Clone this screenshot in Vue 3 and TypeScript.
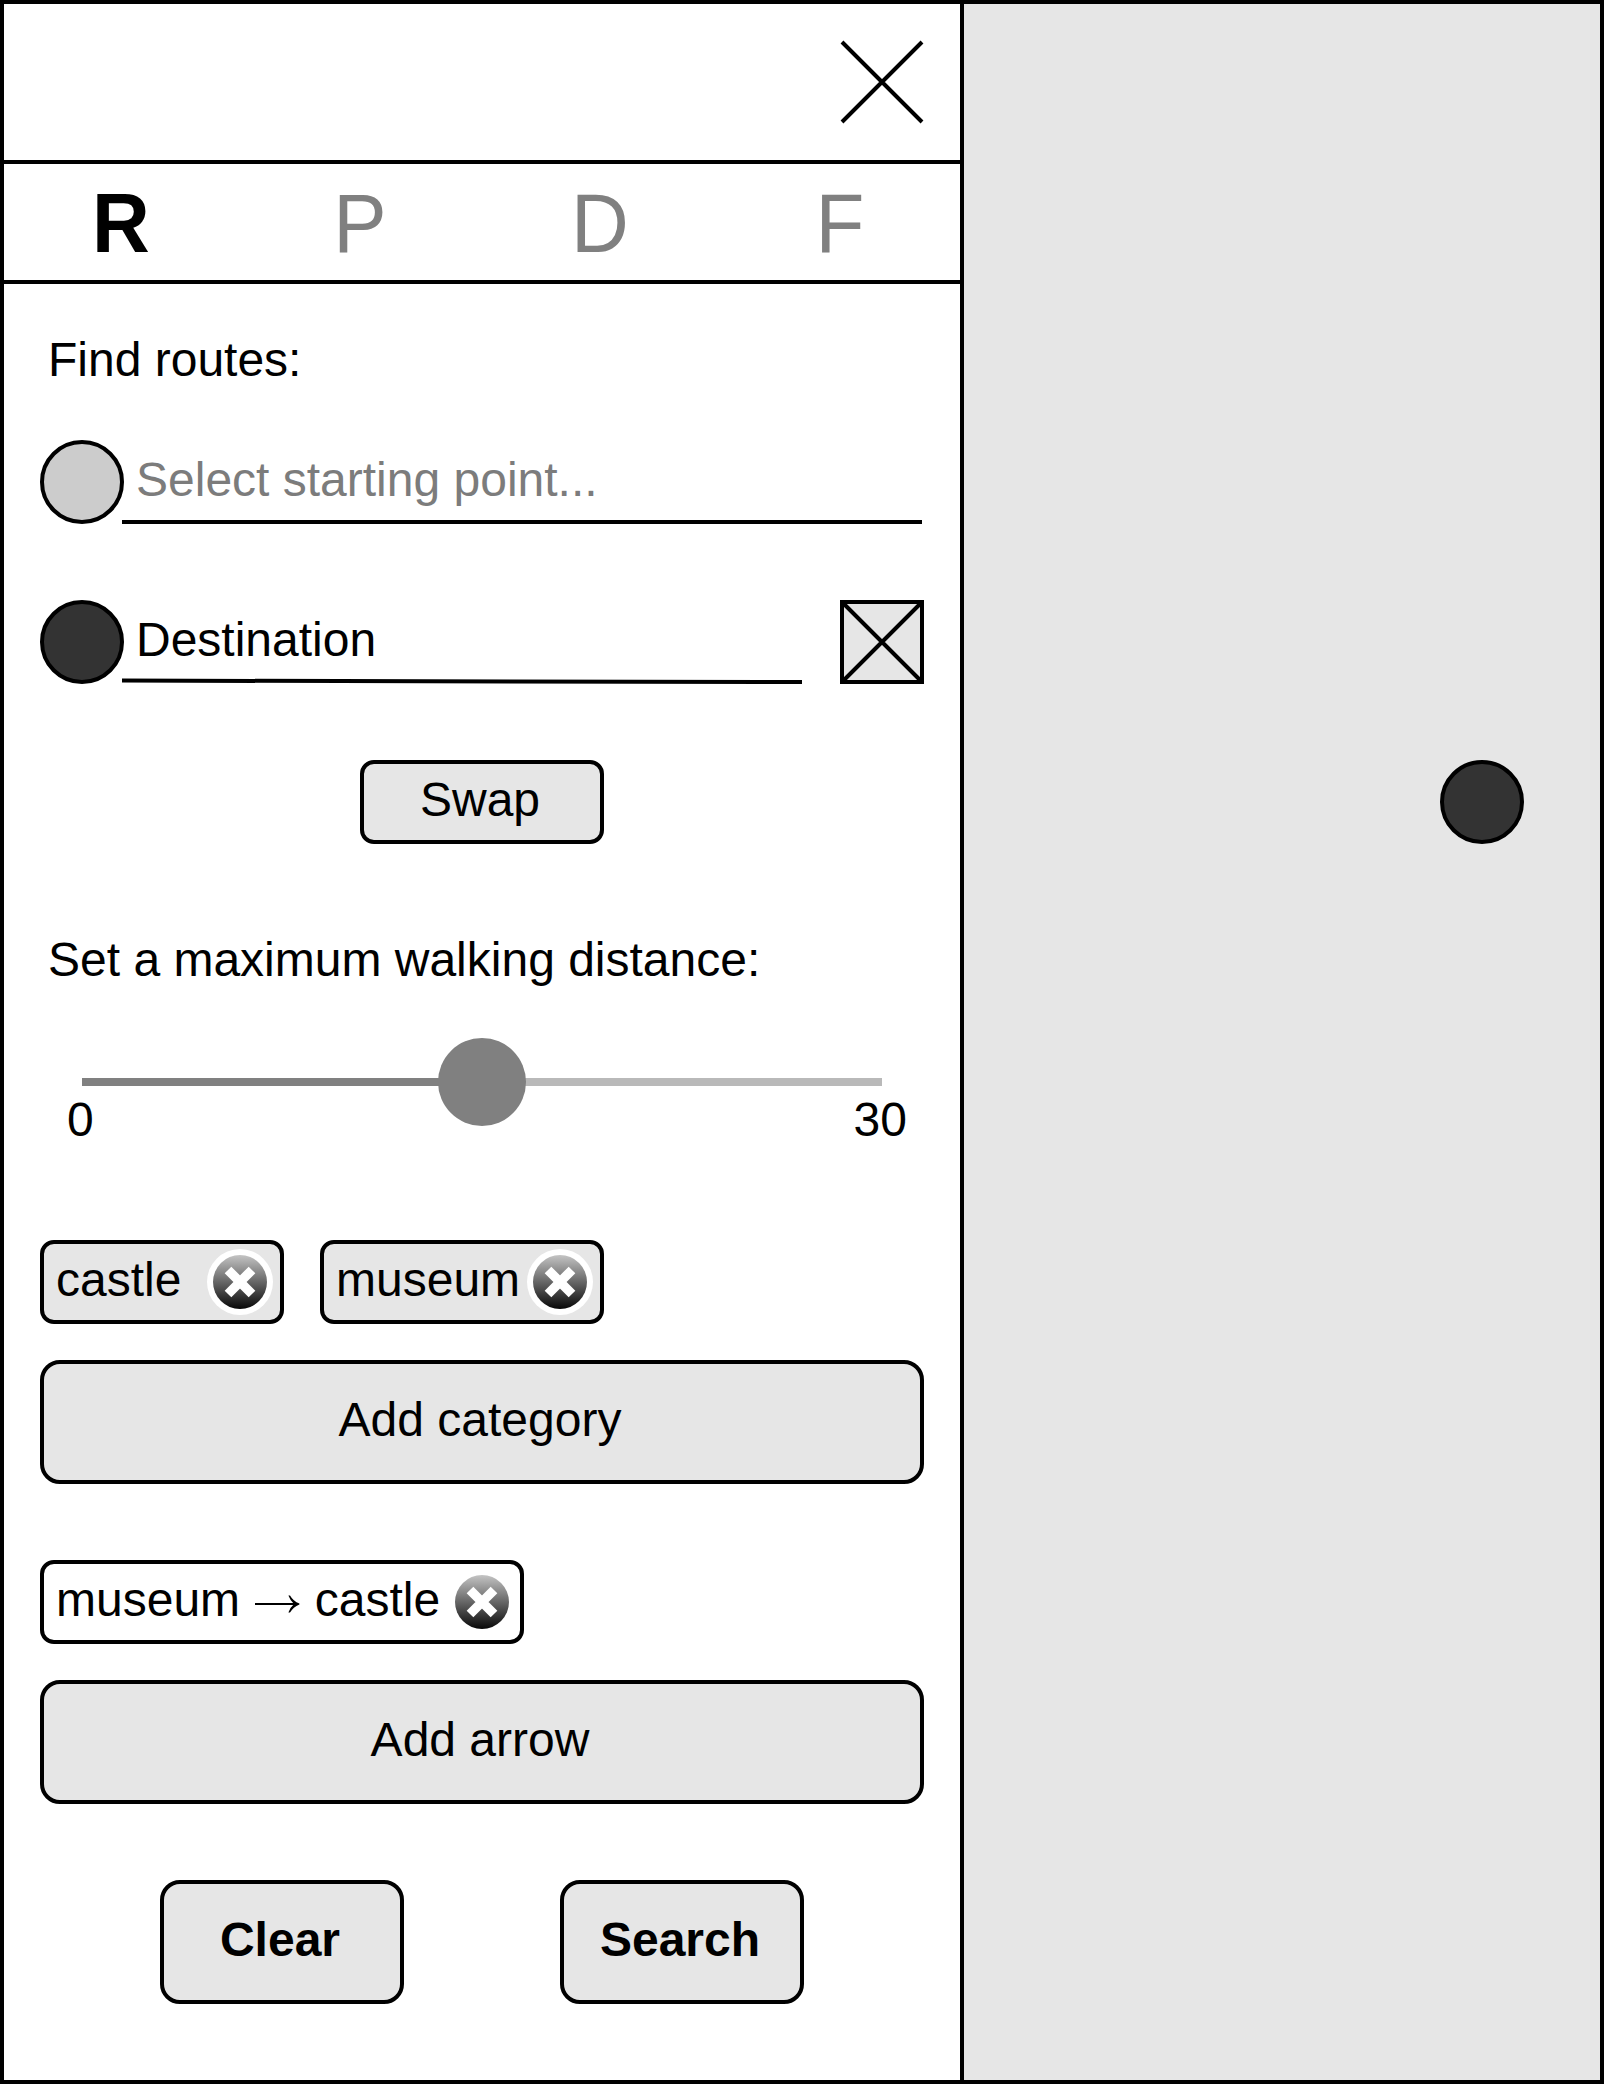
<script setup lang="ts">
import { ref } from 'vue'

interface Tab {
  id: string
  active: boolean
}

const tabs = ref<Tab[]>([
  { id: 'R', active: true },
  { id: 'P', active: false },
  { id: 'D', active: false },
  { id: 'F', active: false },
])

const categories = ref<string[]>(['castle', 'museum'])
const maxDistance = 30
const distance = ref(15)
</script>

<template>
  <div class="screen">
    <aside class="panel">
      <header class="top">
        <svg class="close" viewBox="0 0 84 84" width="84" height="84">
          <path d="M2 2L82 82M82 2L2 82" stroke="#000" stroke-width="4" stroke-linecap="butt" />
        </svg>
      </header>

      <nav class="tabs">
        <span v-for="tab in tabs" :key="tab.id" class="tab" :class="{ active: tab.active }">{{ tab.id }}</span>
      </nav>

      <main class="body">
        <p class="label">Find routes:</p>

        <div class="point-row first">
          <span class="dot light"></span>
          <div class="field underlined"><span class="placeholder">Select starting point...</span></div>
        </div>

        <div class="point-row second">
          <span class="dot dark"></span>
          <div class="field short">
            <span>Destination</span>
            <svg class="slope" viewBox="0 0 680 8" width="680" height="8">
              <path d="M0 4.6L680 6" stroke="#000" stroke-width="4" />
            </svg>
          </div>
          <svg class="box" viewBox="0 0 84 84" width="84" height="84">
            <rect x="2" y="2" width="80" height="80" fill="#e6e6e6" stroke="#000" stroke-width="4" />
            <path d="M2 2L82 82M82 2L2 82" stroke="#000" stroke-width="4" />
          </svg>
        </div>

        <div class="btn swap"><span>Swap</span></div>

        <p class="label walking">Set a maximum walking distance:</p>

        <div class="slider">
          <span class="fill" :style="{ width: (distance / maxDistance) * 100 + '%' }"></span>
          <span class="thumb"></span>
        </div>
        <div class="range">
          <span>0</span>
          <span>{{ maxDistance }}</span>
        </div>

        <div class="chips">
          <div v-for="name in categories" :key="name" class="chip" :class="name">
            <span>{{ name }}</span>
            <svg class="remove" viewBox="0 0 66 66" width="66" height="66">
              <defs>
                <linearGradient :id="'shade-' + name" x1="0" y1="0" x2="0" y2="1">
                  <stop offset="0" stop-color="#c4c4c4" />
                  <stop offset="1" stop-color="#080808" />
                </linearGradient>
              </defs>
              <circle cx="33" cy="33" r="33" fill="#fff" />
              <circle cx="33" cy="33" r="27" :fill="'url(#shade-' + name + ')'" />
              <path d="M21 21L45 45M45 21L21 45" stroke="#fff" stroke-width="9.4" />
            </svg>
          </div>
        </div>

        <div class="btn wide"><span>Add category</span></div>

        <div class="chip relation">
          <span>museum <svg class="arrow" viewBox="0 0 48 24" width="48" height="24" role="img" aria-label="to">
            <path d="M2 11H43V13H2Z" />
            <path d="M35.4 3.6L37 3.4Q40.2 9 46.4 11.6V12.4Q40.2 15 37 20.6L35.4 20.4Q37.2 15.4 41 12Q37.2 8.6 35.4 3.6Z" />
          </svg> castle</span>
          <svg class="remove" viewBox="0 0 66 66" width="66" height="66">
            <defs>
              <linearGradient id="shade-relation" x1="0" y1="0" x2="0" y2="1">
                <stop offset="0" stop-color="#c4c4c4" />
                <stop offset="1" stop-color="#080808" />
              </linearGradient>
            </defs>
            <circle cx="33" cy="33" r="27" fill="url(#shade-relation)" />
            <path d="M21 21L45 45M45 21L21 45" stroke="#fff" stroke-width="9.4" />
          </svg>
        </div>

        <div class="btn wide"><span>Add arrow</span></div>

        <div class="actions">
          <div class="btn action"><span>Clear</span></div>
          <div class="btn action"><span>Search</span></div>
        </div>
      </main>
    </aside>

    <section class="map">
      <span class="dot dark pin"></span>
    </section>
  </div>
</template>

<style>
body {
  margin: 0;
}
</style>

<style scoped>
.screen,
.screen * {
  box-sizing: border-box;
}
.screen {
  width: 1604px;
  height: 2084px;
  display: flex;
  border: 4px solid #000;
  background: #fff;
  color: #000;
  font-family: "Liberation Sans", Arial, sans-serif;
  font-size: 48px;
  line-height: 60px;
  white-space: nowrap;
}
svg {
  display: block;
  flex: none;
  overflow: visible;
}
.panel {
  width: 960px;
  flex: none;
  border-right: 4px solid #000;
}
.top {
  height: 160px;
  border-bottom: 4px solid #000;
  display: flex;
  justify-content: flex-end;
  padding: 36px 36px 0 0;
}
.tabs {
  height: 120px;
  border-bottom: 4px solid #000;
  display: flex;
  padding-top: 11px;
}
.tab {
  width: 240px;
  flex: none;
  margin-left: -4px;
  margin-right: 4px;
  text-align: center;
  font-size: 80px;
  line-height: 100px;
  color: #808080;
  transform: scaleY(1.04);
  transform-origin: 50% 78px;
}
.tab.active {
  color: #000;
  font-weight: bold;
  margin-left: -3px;
  margin-right: 3px;
}
.body {
  padding: 46px 36px 0;
}
.label {
  margin: 0;
  padding-left: 8px;
  height: 60px;
}
.point-row {
  display: flex;
  height: 84px;
}
.point-row.first {
  margin-top: 50px;
}
.point-row.second {
  margin-top: 76px;
}
.dot {
  width: 84px;
  height: 84px;
  flex: none;
  border: 4px solid #000;
  border-radius: 50%;
}
.light {
  background: #ccc;
}
.dark {
  background: #333;
}
.field {
  margin-left: -2px;
  padding: 10px 0 0 14px;
  height: 84px;
}
.underlined {
  width: 800px;
  border-bottom: 4px solid #000;
}
.short {
  width: 680px;
  margin-right: 38px;
}
.slope {
  margin: 6px 0 0 -14px;
}
.placeholder {
  color: #7c7c7c;
}
.btn {
  display: flex;
  justify-content: center;
  align-items: center;
  border: 4px solid #000;
  border-radius: 20px;
  background: #e6e6e6;
  padding: 0 4px 5px 0;
}
.swap {
  width: 244px;
  height: 84px;
  margin: 76px 0 0 320px;
  border-radius: 14px;
}
.walking {
  margin-top: 86px;
}
.slider {
  display: flex;
  align-items: center;
  width: 800px;
  height: 8px;
  margin: 88px 0 0 42px;
  background: #b9b9b9;
}
.fill {
  height: 8px;
  flex: none;
  background: #808080;
}
.thumb {
  width: 88px;
  height: 88px;
  flex: none;
  margin-left: -44px;
  border-radius: 50%;
  background: #808080;
}
.range {
  display: flex;
  justify-content: space-between;
  width: 840px;
  margin: 4px 0 0 27px;
}
.chips {
  display: flex;
  gap: 36px;
  margin-top: 90px;
}
.chip {
  display: flex;
  justify-content: space-between;
  align-items: center;
  height: 84px;
  padding: 0 7px 0 12px;
  border: 4px solid #000;
  border-radius: 14px;
  background: #e6e6e6;
}
.chip span {
  padding-bottom: 5px;
}
.castle {
  width: 244px;
}
.museum {
  width: 284px;
}
.wide {
  width: 884px;
  height: 124px;
  margin-top: 36px;
}
.relation {
  width: 484px;
  margin-top: 76px;
  padding-right: 5px;
  background: #fff;
}
.arrow {
  display: inline-block;
  vertical-align: baseline;
}
.actions {
  display: flex;
  gap: 156px;
  margin: 76px 0 0 120px;
}
.action {
  width: 244px;
  height: 124px;
  font-weight: bold;
}
.map {
  flex: 1;
  background: #e6e6e6;
  padding: 756px 0 0 476px;
}
.pin {
  display: block;
}
</style>
